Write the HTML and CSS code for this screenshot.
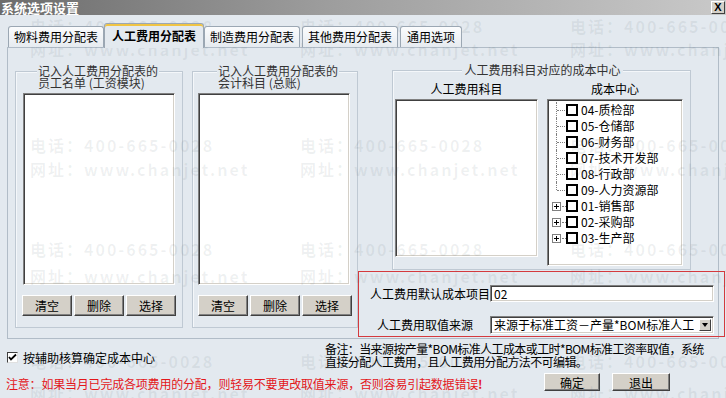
FILE: index.html
```html
<!DOCTYPE html>
<html lang="zh-CN">
<head>
  <meta charset="UTF-8">
  <title>系统选项设置</title>
  <link rel="stylesheet" href="styles.css">
</head>
<body>

<div class="window">
  <!-- 标题栏 -->
  <div class="titlebar">
    <span class="title">系统选项设置</span>
    <span class="close-btn">X</span>
  </div>

  <!-- 页签 -->
  <div class="tabs">
    <div class="tab">物料费用分配表</div>
    <div class="tab active">人工费用分配表</div>
    <div class="tab">制造费用分配表</div>
    <div class="tab">其他费用分配表</div>
    <div class="tab short">通用选项</div>
  </div>

  <div class="tab-panel">
    <div class="group group-emp">
      <div class="group-title">记入人工费用分配表的<br>员工名单 (工资模块)</div>
      <div class="listbox"></div>
      <div class="btn-row">
        <button class="btn">清空</button>
        <button class="btn">删除</button>
        <button class="btn">选择</button>
      </div>
    </div>

    <div class="group group-acct">
      <div class="group-title">记入人工费用分配表的<br>会计科目 (总账)</div>
      <div class="listbox"></div>
      <div class="btn-row">
        <button class="btn">清空</button>
        <button class="btn">删除</button>
        <button class="btn">选择</button>
      </div>
    </div>

    <div class="right-col">
      <div class="group group-center">
        <div class="group-title center">人工费用科目对应的成本中心</div>
        <div class="center-cols">
          <div class="col col-subject">
            <div class="col-head">人工费用科目</div>
            <div class="listbox subject-list"></div>
          </div>
          <div class="col col-tree">
            <div class="col-head">成本中心</div>
            <div class="listbox tree">
              <div class="node child"><span class="conn"></span><span class="cb"></span>04-质检部</div>
              <div class="node child"><span class="conn"></span><span class="cb"></span>05-仓储部</div>
              <div class="node child"><span class="conn"></span><span class="cb"></span>06-财务部</div>
              <div class="node child"><span class="conn"></span><span class="cb"></span>07-技术开发部</div>
              <div class="node child"><span class="conn"></span><span class="cb"></span>08-行政部</div>
              <div class="node child last"><span class="conn"></span><span class="cb"></span>09-人力资源部</div>
              <div class="node root"><span class="conn"><span class="plus"></span></span><span class="cb"></span>01-销售部</div>
              <div class="node root"><span class="conn"><span class="plus"></span></span><span class="cb"></span>02-采购部</div>
              <div class="node root"><span class="conn"><span class="plus"></span></span><span class="cb"></span>03-生产部</div>
            </div>
          </div>
        </div>
      </div>

      <div class="source-box">
        <span class="src-label">人工费用默认成本项目</span>
        <div class="field">02</div>
        <span class="src-label indent">人工费用取值来源</span>
        <div class="field combo">
          <span class="combo-text">来源于标准工资－产量*BOM标准人工</span>
          <span class="combo-arrow"></span>
        </div>
      </div>
    </div>
  </div>

  <div class="footer">
    <div class="foot-top">
      <div class="check-opt">
        <span class="checkbox">
          <svg width="9" height="9" viewBox="0 0 9 9"><polyline points="1,4 3,6.5 8,1.5" fill="none" stroke="#000" stroke-width="1.8"/></svg>
        </span>
        按辅助核算确定成本中心
      </div>
      <div class="note">备注：当来源按产量*BOM标准人工成本或工时*BOM标准工资率取值，系统<br>直接分配人工费用，且人工费用分配方法不可编辑。</div>
    </div>
    <div class="foot-bottom">
      <span class="warning">注意：如果当月已完成各项费用的分配，则轻易不要更改取值来源，否则容易引起数据错误<b>!</b></span>
      <div class="actions">
        <button class="btn btn-ok">确定</button>
        <button class="btn btn-exit">退出</button>
      </div>
    </div>
  </div>

  <!-- 水印 -->
  <div class="watermark">
    <div class="wm-row wm-1"><span>电话：400-665-0028</span><span>电话：400-665-0028</span><span>电话：400-665-0028</span></div>
    <div class="wm-row wm-2"><span>网址：www.chanjet.net</span><span>网址：www.chanjet.net</span><span>网址：www.chanjet.net</span></div>
    <div class="wm-row wm-3"><span>电话：400-665-0028</span><span>电话：400-665-0028</span><span>电话：400-665-0028</span></div>
    <div class="wm-row wm-4"><span>网址：www.chanjet.net</span><span>网址：www.chanjet.net</span><span>网址：www.chanjet.net</span></div>
    <div class="wm-row wm-5"><span>电话：400-665-0028</span><span>电话：400-665-0028</span><span>电话：400-665-0028</span></div>
    <div class="wm-row wm-6"><span>网址：www.chanjet.net</span><span>网址：www.chanjet.net</span><span>网址：www.chanjet.net</span></div>
    <div class="wm-row wm-7"><span>电话：400-665-0028</span><span>电话：400-665-0028</span><span>电话：400-665-0028</span></div>
    <div class="wm-row wm-8"><span>网址：www.chanjet.net</span><span>网址：www.chanjet.net</span><span>网址：www.chanjet.net</span></div>
  </div>
</div>

</body>
</html>
```

FILE: styles.css
```css
body {
  margin: 0;
  font-family: "Noto Sans CJK SC", "Liberation Sans", sans-serif;
  font-size: 12px;
  color: #000;
  background-color: #e3e9ef;
}
.window {
  position: relative;
  width: 726px;
  height: 398px;
  overflow: hidden;
  background-color: #e3e9ef; /* 对话框底色 */
}

/* 标题栏 */
.titlebar {
  height: 15px;
  display: flex;
  align-items: center;
  justify-content: space-between;
  padding: 0 1px 0 1px;
  background: linear-gradient(to right, #6c6c6c, #9d9d9d 45%, #c9c9c9);
}
.title {
  color: #fff;
  font-weight: bold;
  font-size: 13px;
  line-height: 15px;
}
.close-btn {
  width: 14px;
  height: 13px;
  box-sizing: border-box;
  background-color: #d4d0c8;
  border: 1px solid;
  border-color: #fff #404040 #404040 #fff;
  font-family: "Liberation Sans", sans-serif;
  font-weight: bold;
  font-size: 11px;
  line-height: 11px;
  text-align: center;
}

/* 页签 */
.tabs {
  position: relative;
  z-index: 1;
  display: flex;
  align-items: flex-end;
  height: 32px;
  padding-left: 8px;
}
.tab {
  width: 96px;
  height: 21px;
  box-sizing: border-box;
  margin-right: 2px;
  border: 1px solid #9ba7b3;
  border-bottom: none;
  border-radius: 3px 3px 0 0;
  background: linear-gradient(#fbfcfd, #e6ebf0);
  text-align: center;
  line-height: 20px;
}
.tab.active {
  width: 100px;
  height: 25px;
  margin-left: -2px;
  margin-right: 0;
  margin-bottom: -1px;
  padding-top: 2px;
  background: #e3e9ef;
  box-shadow: inset 0 2px 0 #f0c444;
  font-weight: bold;
}
.tab.short {
  width: 62px;
}

.tab-panel {
  display: flex;
  align-items: flex-start;
  width: 712px;
  height: 292px;
  box-sizing: border-box;
  margin-left: 7px;
  border: 1px solid #b1bcc7;
}

/* 分组框 */
.group {
  box-sizing: border-box;
  border: 1px solid #bfc9d3;
  box-shadow: inset 1px 1px 0 #f4f7fa;
}
.group-title {
  display: table;
  margin: -7px 0 0 21px;
  padding: 0 1px;
  background-color: #e3e9ef;
  color: #333;
  line-height: 12px;
}
.group-title.center {
  margin: -7px auto 0;
  padding: 0 2px;
}
.group-emp {
  width: 168px;
  margin: 23px 0 0 7px;
  padding-bottom: 11px;
}
.group-acct {
  width: 166px;
  margin: 23px 0 0 9px;
  padding-bottom: 11px;
}
.group-acct .group-title {
  margin-left: 24px;
}

.listbox {
  box-sizing: border-box;
  background-color: #fff;
  border: 1px solid;
  border-color: #808080 #fff #fff #808080;
  box-shadow: inset 1px 1px 0 #404040, inset -1px -1px 0 #d4d0c8;
}
.group-emp .listbox {
  width: 152px;
  height: 192px;
  margin: 4px 0 0 7px;
}
.group-acct .listbox {
  width: 152px;
  height: 192px;
  margin: 4px 0 0 5px;
}

.btn-row {
  display: flex;
  gap: 2px;
  margin: 10px 0 0 6px;
}
.group-acct .btn-row {
  margin-left: 5px;
}
.btn {
  width: 50px;
  height: 21px;
  padding: 0;
  font-family: inherit;
  font-size: 12px;
  color: #000;
  background-color: #d4d0c8;
  border: 1px solid;
  border-color: #fff #404040 #404040 #fff;
  box-shadow: inset -1px -1px 0 #808080;
}

/* 成本中心 */
.right-col {
  width: 359px;
  display: flex;
  flex-direction: column;
}
.group-center {
  margin: 22px 26px 0 34px;
  padding: 0 0 3px 2px;
}
.center-cols {
  display: flex;
  gap: 9px;
  margin-top: 7px;
}
.col-head {
  text-align: center;
  line-height: 12px;
  margin-bottom: 4px;
}
.col-subject {
  width: 143px;
}
.subject-list {
  height: 158px;
}
.col-tree {
  width: 136px;
}
.tree {
  height: 167px;
  padding: 2px 0 0 2px;
}
.node {
  display: flex;
  align-items: center;
  height: 16px;
  line-height: 16px;
  white-space: nowrap;
}
.conn {
  position: relative;
  width: 16px;
  height: 16px;
}
.child .conn::before {
  content: "";
  position: absolute;
  left: 6px;
  top: 0;
  bottom: 0;
  border-left: 1px dotted #808080;
}
.child.last .conn::before {
  bottom: 8px;
}
.child .conn::after {
  content: "";
  position: absolute;
  left: 7px;
  top: 8px;
  width: 8px;
  border-top: 1px dotted #808080;
}
.root .conn::after {
  content: "";
  position: absolute;
  left: 12px;
  top: 8px;
  width: 4px;
  border-top: 1px dotted #808080;
}
.plus {
  position: absolute;
  left: 2px;
  top: 4px;
  width: 9px;
  height: 9px;
  box-sizing: border-box;
  border: 1px solid #808080;
  background-color: #fff;
}
.plus::before {
  content: "";
  position: absolute;
  left: 1px;
  top: 3px;
  width: 5px;
  border-top: 1px solid #000;
}
.plus::after {
  content: "";
  position: absolute;
  left: 3px;
  top: 1px;
  height: 5px;
  border-left: 1px solid #000;
}
.cb {
  width: 12px;
  height: 12px;
  box-sizing: border-box;
  border: 2px solid #000;
  background-color: #fff;
  margin-right: 3px;
}

/* 红框区域 */
.source-box {
  display: grid;
  grid-template-columns: 131px 224px;
  row-gap: 9px;
  align-items: center;
  height: 66px;
  box-sizing: border-box;
  margin: 1px -8px 0 0;
  padding-top: 11px;
  border: 1px solid #d43a3e;
}
.src-label {
  padding-left: 11px;
  line-height: 14px;
}
.src-label.indent {
  padding-left: 18px;
}
.field {
  height: 17px;
  box-sizing: border-box;
  padding-left: 3px;
  background-color: #fff;
  border: 1px solid;
  border-color: #808080 #fff #fff #808080;
  box-shadow: inset 1px 1px 0 #404040, inset -1px -1px 0 #d4d0c8;
  line-height: 15px;
}
.combo {
  height: 18px;
  display: flex;
  align-items: center;
  justify-content: space-between;
  padding-right: 2px;
}
.combo-text {
  white-space: nowrap;
  overflow: hidden;
}
.combo-arrow {
  position: relative;
  flex: none;
  width: 12px;
  height: 12px;
  box-sizing: border-box;
  background-color: #d4d0c8;
  border: 1px solid;
  border-color: #fff #404040 #404040 #fff;
}
.combo-arrow::after {
  content: "";
  position: absolute;
  left: 2px;
  top: 3px;
  border-left: 3px solid transparent;
  border-right: 3px solid transparent;
  border-top: 4px solid #000;
}

/* 底部 */
.footer {
  padding-left: 6px;
}
.foot-top {
  display: flex;
  height: 26px;
  margin-top: 3px;
}
.check-opt {
  display: flex;
  align-items: center;
  width: 319px;
  padding-top: 5px;
}
.checkbox {
  display: flex;
  align-items: center;
  justify-content: center;
  width: 11px;
  height: 11px;
  box-sizing: border-box;
  margin: 0 5px 0 1px;
  background-color: #fff;
  border: 1px solid;
  border-color: #404040 #e0e0e0 #e0e0e0 #404040;
}
.note {
  line-height: 13px;
  letter-spacing: -0.6px;
  white-space: nowrap;
}
.foot-bottom {
  display: flex;
  align-items: center;
  margin-top: 5px;
}
.warning {
  color: #e3171b;
  padding-top: 4px;
  line-height: 14px;
  letter-spacing: -0.2px;
}
.actions {
  display: flex;
  gap: 12px;
  margin-left: auto;
  margin-right: 56px;
}
.btn-ok {
  width: 56px;
  height: 18px;
}
.btn-exit {
  width: 58px;
  height: 18px;
}

/* 水印 */
.watermark {
  position: absolute;
  top: 0;
  left: 0;
  right: 0;
  bottom: 0;
  pointer-events: none;
  color: rgba(80, 95, 110, 0.09);
  font-size: 16px;
  font-weight: bold;
  letter-spacing: 2px;
}
.wm-row {
  position: absolute;
  left: 30px;
  display: flex;
  line-height: 16px;
  white-space: nowrap;
}
.wm-row span {
  width: 270px;
  flex: none;
}
.wm-1 { top: 18px; }
.wm-2 { top: 41px; }
.wm-3 { top: 137px; }
.wm-4 { top: 161px; }
.wm-5 { top: 241px; }
.wm-6 { top: 268px; }
.wm-7 { top: 353px; }
.wm-8 { top: 385px; }
```
